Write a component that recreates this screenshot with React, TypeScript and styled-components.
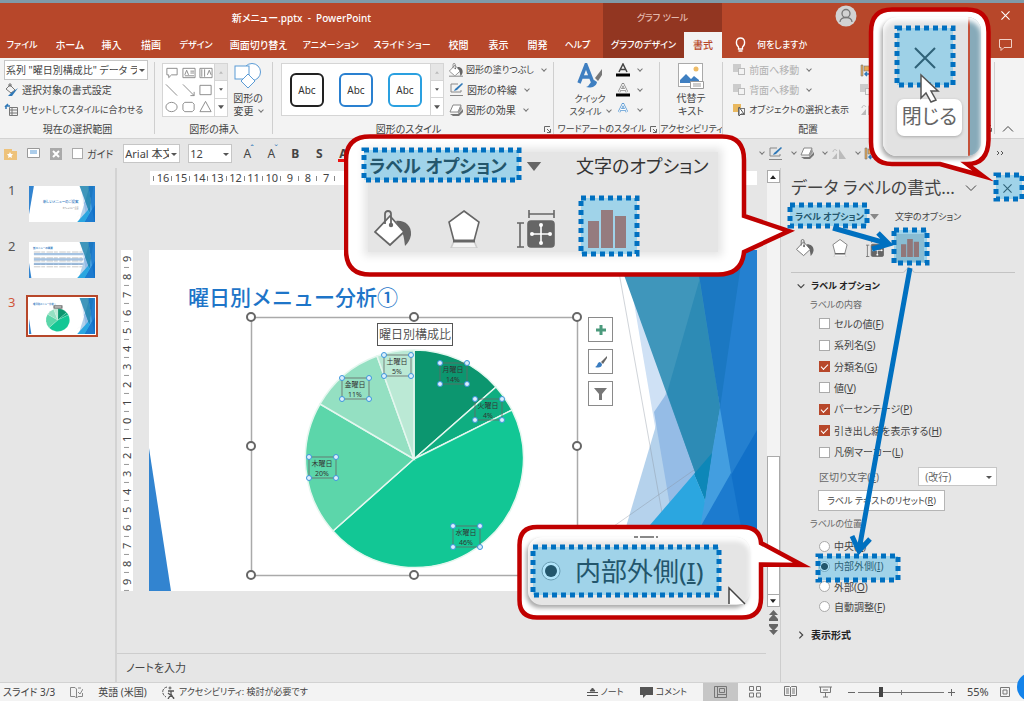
import React from "react";
import styled, { createGlobalStyle, css } from "styled-components";

const GlobalStyle = createGlobalStyle`
  * { box-sizing: border-box; }
  body {
    margin: 0;
    background: #e6e6e6;
    color: #444;
    font-family: "Noto Sans", "Noto Sans CJK JP", sans-serif;
    font-size: 10px;
    line-height: 14px;
    font-feature-settings: "palt";
  }
  button, input, select { font: inherit; color: inherit; font-feature-settings: inherit; }
  button { border: 0; padding: 0; background: none; white-space: nowrap; }
  svg { display: block; flex: none; }
  u { text-underline-offset: 1px; }
`;

const red = "#b7472a";
const blue = "#0070c0";
const gray = "#666";

const Window = styled.div`
  position: relative;
  display: flex;
  flex-direction: column;
  min-height: 100vh;
  overflow: hidden;
`;

/* ---------- header ---------- */
const Header = styled.header`
  display: flex;
  height: 58px;
  background: ${red};
  border-top: 3px solid #7f9aa8;
  color: #fff;
`;
const HeaderPart = styled.div<{ $basis?: number; $dark?: boolean }>`
  flex: ${(p) => (p.$basis ? `0 0 ${p.$basis}px` : "1 1 0")};
  display: flex;
  flex-direction: column;
  background: ${(p) => (p.$dark ? "#923621" : "transparent")};
`;
const TitleRow = styled.div<{ $soft?: boolean }>`
  display: flex;
  align-items: center;
  justify-content: center;
  height: 29px;
  font-size: ${(p) => (p.$soft ? 9 : 10)}px;
  font-weight: 500;
  color: ${(p) => (p.$soft ? "#e3b9ad" : "#fff")};
`;
const TabRow = styled.nav`
  display: flex;
  height: 26px;
`;
const Tab = styled.button<{ $w: number; $active?: boolean; $small?: boolean }>`
  display: flex;
  align-items: center;
  justify-content: center;
  width: ${(p) => p.$w}px;
  font-size: ${(p) => (p.$small ? 9 : 10)}px;
  font-weight: 500;
  color: ${(p) => (p.$active ? red : "#fff")};
  background: ${(p) => (p.$active ? "#f3f3f3" : "transparent")};
`;
const WindowTools = styled.div`
  display: flex;
  align-items: center;
  justify-content: flex-end;
  gap: 144px;
  height: 29px;
  padding: 0 14px 4px 0;
`;
const AskRow = styled.div`
  display: flex;
  align-items: center;
  justify-content: space-between;
  height: 25px;
  padding: 0 12px;
`;
const Ask = styled.button`
  display: flex;
  align-items: center;
  gap: 10px;
  font-size: 9px;
  font-weight: 500;
  color: #fff;
`;

/* ---------- ribbon ---------- */
const Ribbon = styled.section`
  display: flex;
  height: 81px;
  padding-top: 2px;
  background: #f3f3f3;
  border-bottom: 1px solid #d2d2d2;
`;
const Group = styled.div<{ $w?: number }>`
  flex: ${(p) => (p.$w ? `0 0 ${p.$w}px` : "1 1 0")};
  display: flex;
  flex-direction: column;
  position: relative;
  &::after {
    content: "";
    position: absolute;
    right: 0;
    top: 2px;
    height: 72px;
    border-right: ${(p) => (p.$w ? "1px solid #cfcfcf" : "0")};
  }
`;
const GroupBody = styled.div<{ $pad?: number; $gap?: number }>`
  display: flex;
  height: 60px;
  padding-left: ${(p) => p.$pad ?? 0}px;
  gap: ${(p) => p.$gap ?? 0}px;
`;
const GroupLabel = styled.div<{ $small?: boolean }>`
  display: flex;
  align-items: center;
  justify-content: center;
  height: 19px;
  white-space: nowrap;
  font-size: ${(p) => (p.$small ? 9 : 10)}px;
  & > span { flex: 1; display: flex; justify-content: center; }
  & > svg { margin-right: 3px; }
`;
const Stack = styled.div<{ $w?: number }>`
  display: flex;
  flex-direction: column;
  width: ${(p) => (p.$w ? `${p.$w}px` : "auto")};
`;
const Cmd = styled.button<{ $off?: boolean; $small?: boolean }>`
  display: flex;
  align-items: center;
  gap: 3px;
  height: 20px;
  font-size: ${(p) => (p.$small ? 9 : 10)}px;
  color: ${(p) => (p.$off ? "#b1b1b1" : "#444")};
`;
const Caret = styled.i`
  width: 4px;
  height: 4px;
  margin: 0 0 3px 5px;
  border: solid #777;
  border-width: 0 1px 1px 0;
  transform: rotate(45deg);
`;
const BigCmd = styled.button<{ $w: number; $small?: boolean }>`
  display: flex;
  flex-direction: column;
  align-items: center;
  width: ${(p) => p.$w}px;
  padding-top: 3px;
  font-size: ${(p) => (p.$small ? 9 : 10)}px;
  line-height: 13px;
  & > svg { margin-bottom: 3px; }
  & > span { display: flex; align-items: center; }
`;
const Drop = styled.select<{ $w: number; $h: number; $small?: boolean }>`
  appearance: none;
  width: ${(p) => p.$w}px;
  height: ${(p) => p.$h}px;
  padding: 0 10px 0 1px;
  border: 1px solid #c6c6c6;
  border-radius: 0;
  background: #fff;
  font-size: ${(p) => (p.$small ? 10 : 11)}px;
  text-overflow: clip;
`;
const DropBox = styled.span<{ $right?: number }>`
  position: relative;
  display: inline-flex;
  &::after {
    content: "";
    position: absolute;
    right: ${(p) => p.$right ?? 3}px;
    top: calc(50% - 1px);
    border: 3px solid transparent;
    border-top: 3px solid #555;
    border-bottom: 0;
  }
`;
const Gallery = styled.div<{ $h: number }>`
  display: flex;
  height: ${(p) => p.$h}px;
  margin-top: 3px;
  background: #fff;
  border: 1px solid #d5d5d5;
`;
const ShapeGrid = styled.div`
  display: grid;
  grid-template-columns: repeat(3, 17px);
  align-items: center;
  justify-items: center;
`;
const Scroller = styled.div`
  display: grid;
  grid-template-rows: repeat(3, 1fr);
  width: 13px;
  border-left: 1px solid #d5d5d5;
  & > button { display: grid; place-items: center; border-bottom: 1px solid #d5d5d5; }
  & > button:first-child { background: #e6e6e6; }
  & > button:last-child { border-bottom: 0; }
`;
const StyleList = styled.div`
  display: flex;
  align-items: center;
  gap: 15px;
  padding: 0 8px;
`;
const StyleItem = styled.button<{ $c: string }>`
  width: 34px;
  height: 34px;
  border: 2px solid ${(p) => p.$c};
  border-radius: 6px;
  background: #fff;
  font-size: 10px;
  color: #333;
`;

/* ---------- quick access ---------- */
const QuickBar = styled.section`
  display: flex;
  align-items: center;
  justify-content: space-between;
  height: 29px;
  padding: 0 19px 0 4px;
  background: #e6e6e6;
`;
const QuickSet = styled.div<{ $gap: number }>`
  display: flex;
  align-items: center;
  gap: ${(p) => p.$gap}px;
`;
const Letter = styled.button<{ $mark?: string; $line?: string }>`
  position: relative;
  width: 10px;
  height: 16px;
  font-size: 12px;
  line-height: 16px;
  font-weight: ${(p) => (p.$mark ? 400 : 700)};
  border-bottom: ${(p) => (p.$line ? `3px solid ${p.$line}` : "0")};
  &::after {
    content: "${(p) => p.$mark ?? ""}";
    position: absolute;
    left: 8px;
    top: -2px;
    font-size: 9px;
    line-height: 9px;
    color: #2f78b7;
  }
`;

/* ---------- work area ---------- */
const Work = styled.main`
  display: flex;
  flex: 1;
  min-height: 514px;
`;
const Thumbs = styled.aside`
  display: flex;
  flex-direction: column;
  gap: 14px;
  width: 117px;
  padding: 15px 0 0 8px;
  border-right: 2px solid #d3d3d3;
`;
const ThumbRow = styled.div<{ $on?: boolean }>`
  display: flex;
  height: 42px;
  gap: 11px;
  font-size: 13px;
  line-height: 14px;
  color: ${(p) => (p.$on ? "#d0563a" : "#555")};
  & > button {
    width: 72px;
    height: 42px;
    padding: 1px;
    border: 2px solid ${(p) => (p.$on ? red : "transparent")};
    background: ${(p) => (p.$on ? "#fff" : "transparent")};
  }
`;
const Center = styled.div`
  display: flex;
  flex-direction: column;
  flex: 1;
  min-width: 0;
`;
const HRuler = styled.div`
  display: flex;
  justify-content: space-between;
  height: 14px;
  margin: 3px 9px 0 33px;
  padding: 0 5px 0 4px;
  background: #fff;
  font-size: 11px;
  line-height: 14px;
`;
const HMark = styled.span`
  display: flex;
  align-items: center;
  justify-content: center;
  width: 18px;
  position: relative;
  &::before {
    content: "";
    position: absolute;
    left: -1px;
    top: 5px;
    height: 5px;
    border-left: 1px solid #888;
  }
`;
const SlideRow = styled.div`
  display: flex;
  gap: 16px;
  height: 341px;
  margin: 65px 9px 0 4px;
`;
const VRuler = styled.div`
  display: flex;
  flex-direction: column;
  justify-content: space-between;
  width: 12px;
  background: #fff;
  font-size: 11px;
  line-height: 12px;
`;
const VMark = styled.span`
  position: relative;
  display: flex;
  justify-content: center;
  align-items: center;
  height: 18px;
  writing-mode: vertical-rl;
  transform: rotate(180deg);
  &::before {
    content: "";
    position: absolute;
    top: 0;
    left: 4px;
    width: 5px;
    border-top: 1px solid #999;
  }
`;
const Slide = styled.div`
  position: relative;
  flex: 1;
  background: #fff;
  & > svg { width: 100%; height: 100%; }
`;
const SlideTitle = styled.h1`
  position: absolute;
  left: 39px;
  top: 33px;
  margin: 0;
  font-size: 21px;
  line-height: 26px;
  font-weight: 500;
  color: #1e75c8;
  font-family: "Noto Sans CJK JP", sans-serif;
  font-feature-settings: normal;
  white-space: nowrap;
`;
const ChartButtons = styled.div`
  position: absolute;
  left: 439px;
  top: 67px;
  display: flex;
  flex-direction: column;
  gap: 7px;
  & > button {
    display: grid;
    place-items: center;
    width: 25px;
    height: 25px;
    border: 1px solid #8a8a8a;
    background: #fff;
  }
`;
const Notes = styled.div`
  height: 29px;
  margin-top: auto;
  padding: 7px 9px;
  border-top: 1px solid #cdcdcd;
  font-size: 11px;
`;
const Scroll = styled.div`
  display: flex;
  flex-direction: column;
  align-items: center;
  width: 15px;
  padding-top: 2px;
  border-right: 1px solid #cdcdcd;
`;
const ScrollBtn = styled.button`
  display: grid;
  place-items: center;
  width: 13px;
  height: 13px;
  border: 1px solid #aaa;
  background: #fff;
`;
const Track = styled.div`
  display: flex;
  flex-direction: column;
  justify-content: flex-end;
  width: 13px;
  height: 411px;
  background: #f3f3f3;
  &::after {
    content: "";
    height: 137px;
    background: #fff;
    border: 1px solid #aaa;
    border-bottom: 0;
  }
`;
const Jump = styled.div`
  display: flex;
  flex-direction: column;
  gap: 3px;
  margin-top: 3px;
`;

/* ---------- format pane ---------- */
const Pane = styled.aside`
  width: 243px;
  padding: 8px 0 0 10px;
`;
const PaneHead = styled.div`
  display: flex;
  align-items: center;
  height: 24px;
  padding-right: 12px;
  & > h2 { flex: 1; margin: 0; font-size: 17px; line-height: 24px; font-weight: 400; white-space: nowrap; }
  & > button + button { margin-left: 26px; }
`;
const PaneTabs = styled.div`
  display: flex;
  align-items: center;
  gap: 6px;
  height: 34px;
  padding-left: 4px;
  font-size: 9px;
  & > button:last-child { margin-left: 10px; }
`;
const Strong = styled.button`
  font-size: 9px;
  font-weight: 700;
  color: #333;
`;
const PaneIcons = styled.div`
  display: flex;
  align-items: center;
  gap: 17px;
  height: 27px;
  padding-left: 5px;
`;
const BarsButton = styled.button`
  display: grid;
  place-items: center;
  width: 28px;
  height: 28px;
  margin-left: -5px;
  background: #c5c5c5;
`;
const Notch = styled.div`
  position: relative;
  height: 12px;
  margin-right: 9px;
  border-bottom: 1px solid #c3c3c3;
  &::after {
    content: "";
    position: absolute;
    left: 114px;
    bottom: -4px;
    width: 7px;
    height: 7px;
    background: #e6e6e6;
    border: solid #c3c3c3;
    border-width: 1px 0 0 1px;
    transform: rotate(45deg);
  }
`;
const Section = styled.button<{ $top: number; $small?: boolean }>`
  display: flex;
  align-items: center;
  gap: 6px;
  height: 20px;
  margin-top: ${(p) => p.$top}px;
  padding-left: 6px;
  font-size: ${(p) => (p.$small ? 9 : 10)}px;
  font-weight: 700;
  color: #222;
`;
const SubHead = styled.div<{ $h: number }>`
  display: flex;
  align-items: center;
  height: ${(p) => p.$h}px;
  padding-left: 19px;
  font-size: 9px;
  color: #666;
`;
const Options = styled.div<{ $h: number }>`
  display: flex;
  flex-direction: column;
  height: ${(p) => p.$h}px;
  padding-left: 28px;
  & > label {
    display: flex;
    flex: 1;
    align-items: center;
    gap: 4px;
  }
`;
const inputBase = css`
  appearance: none;
  flex: none;
  width: 11px;
  height: 11px;
  margin: 0;
  border: 1px solid #aaa;
  background: #fff;
`;
const Check = styled.input.attrs({ type: "checkbox" })`
  ${inputBase}
  &:checked {
    background: ${red};
    border-color: ${red};
  }
  &:checked::after {
    content: "";
    display: block;
    width: 6px;
    height: 3px;
    margin: 2px 0 0 1px;
    border: solid #fff;
    border-width: 0 0 1px 1px;
    transform: rotate(-45deg);
  }
`;
const Radio = styled.input.attrs({ type: "radio" })`
  ${inputBase}
  border-radius: 50%;
  &:checked { background: radial-gradient(circle, #333 0 3px, #fff 4px); }
`;
const SplitRow = styled.div`
  display: flex;
  align-items: center;
  justify-content: space-between;
  height: 27px;
  padding: 0 27px 0 28px;
  color: #666;
`;
const ResetButton = styled.button`
  display: block;
  width: 127px;
  height: 21px;
  margin-left: 27px;
  border: 1px solid #b5b5b5;
  background: #fff;
  font-size: 9px;
`;

/* ---------- status bar ---------- */
const Status = styled.footer`
  position: relative;
  display: flex;
  align-items: center;
  justify-content: space-between;
  height: 19px;
  padding: 0 14px 0 3px;
  background: #f3f3f3;
  border-top: 1px solid #d2d2d2;
`;
const StatusSet = styled.div<{ $gap: number }>`
  display: flex;
  align-items: center;
  height: 18px;
  gap: ${(p) => p.$gap}px;
  white-space: nowrap;
`;
const StatusItem = styled.button`
  display: flex;
  align-items: center;
  gap: 3px;
  font-size: 9px;
`;
const Percent = styled.span`
  width: 22px;
  font-size: 11px;
`;
const ViewButton = styled.button<{ $on?: boolean }>`
  display: grid;
  place-items: center;
  width: 35px;
  height: 18px;
  background: ${(p) => (p.$on ? "#c6c6c6" : "transparent")};
`;
const Zoom = styled.input.attrs({ type: "range" })`
  appearance: none;
  width: 86px;
  height: 10px;
  margin: 0;
  background:
    linear-gradient(#777, #777) center / 100% 1px no-repeat,
    linear-gradient(#777, #777) center / 1px 5px no-repeat;
  &::-webkit-slider-thumb {
    appearance: none;
    width: 4px;
    height: 10px;
    background: #444;
  }
`;
const HelpBubble = styled.span`
  position: absolute;
  right: -21px;
  bottom: 0;
  width: 28px;
  height: 28px;
  border-radius: 50%;
  background: #1483ea;
`;

/* ---------- annotations ---------- */
const Layer = styled.div`
  position: absolute;
  top: 0;
  right: 0;
  width: 680px;
  height: 701px;
  pointer-events: none;
  & > svg { position: absolute; inset: 0; }
`;
const Panel = styled.div<{ $x: number; $y: number; $w: number; $h: number; $soft?: boolean }>`
  position: absolute;
  left: ${(p) => p.$x}px;
  top: ${(p) => p.$y}px;
  width: ${(p) => p.$w}px;
  height: ${(p) => p.$h}px;
  background: #e5e5e5;
  color: #333;
  white-space: nowrap;
  ${(p) =>
    p.$soft
      ? css`box-shadow: 0 0 8px 4px #e5e5e5;`
      : css`border-radius: 14px; box-shadow: inset 0 4px 5px #fff, -2px 3px 4px #aaa;`}
`;
const BigTabs = styled.div`
  display: flex;
  align-items: center;
  height: 28px;
  font-size: 18px;
  line-height: 28px;
  & > b { width: 158px; padding-left: 1px; }
  & > svg { margin-right: 34px; }
`;
const BigIcons = styled.div`
  display: flex;
  align-items: center;
  justify-content: space-between;
  width: 258px;
  margin-top: 30px;
  padding-left: 6px;
`;
const BigRadio = styled.div`
  display: flex;
  align-items: center;
  gap: 14px;
  height: 68px;
  padding-left: 13px;
  font-size: 26px;
`;
const ClosePanel = styled(Panel)`
  background: linear-gradient(90deg, #e2e2e2 85px, #c4513a 85px 87px, #87aab9 87px);
`;
const Tip = styled.span`
  position: absolute;
  left: 14px;
  top: 82px;
  width: 65px;
  height: 37px;
  border-radius: 7px;
  background: #fff;
  box-shadow: 0 1px 3px #aaa;
  font-size: 20px;
  line-height: 36px;
  text-align: center;
  color: #666;
`;

/* ---------- icons ---------- */
const Chevron = ({ w = 12, dir = "down" }: { w?: number; dir?: "down" | "right" | "up" }) => (
  <svg width={w} height={w} viewBox="0 0 12 12" fill="none" stroke="#444" strokeWidth={w > 10 ? 1 : 1.8}>
    <path d={dir === "down" ? "M1 3.5l5 5 5-5" : dir === "up" ? "M1 8.5l5-5 5 5" : "M3.5 1l5 5-5 5"} />
  </svg>
);
const Cross = ({ s, c = "#444" }: { s: number; c?: string }) => (
  <svg width={s} height={s} viewBox="0 0 10 10" stroke={c} strokeWidth="1.200" fill="none">
    <path d="M.5.5l9 9M9.5.5l-9 9" />
  </svg>
);
const Tri = ({ w = 7, up = false, c = "#555" }: { w?: number; up?: boolean; c?: string }) => (
  <svg width={w} height={w / 2 + 1} viewBox="0 0 8 5" fill={c}>
    <path d={up ? "M0 5l4-5 4 5z" : "M0 0l4 5 4-5z"} />
  </svg>
);
const Launcher = () => (
  <svg width="7" height="7" viewBox="0 0 7 7" fill="none" stroke="#666">
    <path d="M.5 6V.5H6M3 3l3 3M6.500 3v3.500H3" />
  </svg>
);
const Bucket = ({ s, c }: { s: number; c?: string }) => (
  <svg width={s} height={s} viewBox="0 0 38 38" fill="none">
    <path d="M22 11c8-1 16 4 15 14-1 5-3 8-6 11-1-9-2-15-6-19z" fill={gray} />
    <path d="M16 6l14 16-14 13L1 22z" fill="#fff" stroke={gray} strokeWidth="1.800" />
    <path d="M11 14V4c0-4 6-4 6 0v10" stroke={gray} strokeWidth="1.800" />
    <circle cx="17" cy="15" r="2.200" fill={gray} />
    {c && <path d="M0 34h38v5H0z" fill={c} />}
  </svg>
);
const Penta = ({ s }: { s: number }) => (
  <svg width={s} height={s} viewBox="0 0 38 38" fill="#fff" stroke={gray} strokeWidth="1.600">
    <path d="M9 31h20l3 7H6z" fill="#f4f4f4" stroke="#ccc" />
    <path d="M19 1l15 11-5 19H9L4 12z" />
    <path d="M8 31h22" strokeWidth="3" />
  </svg>
);
const Size = ({ s }: { s: number }) => (
  <svg width={s} height={s} viewBox="0 0 38 38" fill="none" stroke={gray} strokeWidth="1.600">
    <path d="M12 4h25M12 0v8M37 0v8M3 13v24M0 13h7M0 37h7" />
    <rect x="11" y="11" width="26" height="26" rx="3" fill={gray} />
    <path d="M24 14v20M14 24h20" stroke="#fff" />
    <g fill="#fff" stroke="none">
      <circle cx="24" cy="15" r="2" /><circle cx="24" cy="33" r="2" />
      <circle cx="15" cy="24" r="2" /><circle cx="33" cy="24" r="2" />
    </g>
  </svg>
);
const Bars = ({ s }: { s: number }) => (
  <svg width={s} height={s} viewBox="0 0 38 38" fill="#d24726" fillOpacity=".8">
    <path d="M0 11h11v27H0zM13 0h12v38H13zM27 6h11v32H27z" />
  </svg>
);
const Pen = () => (
  <svg width="15" height="14" viewBox="0 0 15 14" fill="none">
    <path d="M9 1H2v8h10V7M1 12.500h13" stroke="#888" />
    <path d="M5 8l1-2 7-6 1 1-6 6z" fill="#2f78b7" />
  </svg>
);
const Effect = () => (
  <svg width="14" height="13" viewBox="0 0 14 13">
    <path d="M4 12h6l4-4V5l-5 5H1z" fill="#777" />
    <path d="M4 1h8l-3 7H1z" fill="#fff" stroke="#888" />
    <path d="M12 1l1 4-4 5V8z" fill="#999" />
  </svg>
);
const LetterA = ({ c, line, out }: { c: string; line?: string; out?: boolean }) => (
  <svg width="14" height="14" viewBox="0 0 14 14" fill="none" stroke={c} strokeWidth={out ? 2.5 : 1.5}>
    <path d="M3 9L7 1l4 8M4.500 6.500h5" />
    {out && <path d="M3 9L7 1l4 8M4.500 6.500h5" stroke="#fff" strokeWidth="1" />}
    {line && <path d="M0 12h14" stroke={line} strokeWidth="3" />}
  </svg>
);
const Layers = ({ off = true }: { off?: boolean }) => (
  <svg width="13" height="12" viewBox="0 0 13 12">
    <rect x="0" y="0" width="8" height="8" fill={off ? "#ccc" : "#e9b85f"} />
    <rect x="5.500" y="4.500" width="6" height="6" fill="#f3f3f3" stroke={off ? "#bbb" : "#777"} />
    {!off && <path d="M6 3v9l2-2h3z" fill="#fff" stroke="#555" />}
  </svg>
);
const Paste = () => (
  <svg width="12" height="13" viewBox="0 0 12 13">
    <path d="M1 1h2v11H1zM4 2h7v5H4z" fill="#e3a857" stroke="#777" strokeWidth=".6" />
    <path d="M11 10H5M7 8l-2 2 2 2" fill="none" stroke="#2f78b7" strokeWidth="1.500" />
  </svg>
);
const Flip = () => (
  <svg width="16" height="12" viewBox="0 0 16 12" fill="#bbb">
    <path d="M8 1v10h7zM6 5v6H1z" /><path d="M2 4c0-3 3-3 4-1" fill="none" stroke="#bbb" />
  </svg>
);
const Brush = () => (
  <svg width="14" height="14" viewBox="0 0 14 14">
    <path d="M13 1L7 7l2 2 4-6z" fill="#666" />
    <path d="M6 7l2 2c0 4-4 4-7 3 3-1 2-5 5-5z" fill="#3a7cc0" />
  </svg>
);

/* Faceted slide background, drawn in the slide's own 608 by 341 space. */
const Facets = ({ full = false }: { full?: boolean }) => (
  <g>
    <path d="M476 0L527 300 620 300 560 0z" fill="#cfe1f5" />
    <path d="M559 0L458 341H608V0z" fill="#b5d2ec" />
    <path d="M505 162L518 143 560 250 524 274z" fill="#95bce6" />
    <path d="M466 0L527 341M445 290L608 176" stroke="#8a93a0" strokeOpacity=".4" fill="none" />
    <path d="M466 0H550L571 158 563 203 556 250z" fill="#3f96bb" />
    <path d="M559 0L518 143 556 250 571 158 550 27z" fill="#2d8bb5" />
    <path d="M546 0H608V341H550L571 158z" fill="#1b78c2" />
    <path d="M594 0H608V341H575L571 158z" fill="#2480d0" />
    <path d="M571 158L582 223 554 341H520L556 250 563 203z" fill="#439ee0" />
    <path d="M563 203L545 224 556 250z" fill="#0d87b8" />
    <path d="M545 224L444 341H540L556 250z" fill="#2ba6e0" />
    <path d="M608 180L515 341H608z" fill="#1170c8" />
    <path d="M582 223L515 341H604z" fill="#1c7bcf" />
    <path d={full ? "M0 0H45L0 270z" : "M0 198L22 341H0z"} fill="#3284d0" />
  </g>
);

const slices = [
  { d: "M265 209V100A109 109 0 0 1 347 137z", c: "#0c966f" },
  { d: "M265 209L347 137A109 109 0 0 1 363 160z", c: "#0fae81" },
  { d: "M265 209L363 160A109 109 0 0 1 184 281z", c: "#12c795" },
  { d: "M265 209L184 281A109 109 0 0 1 171 154z", c: "#5cd6aa" },
  { d: "M265 209L171 154A109 109 0 0 1 228 106z", c: "#94e0c2" },
  { d: "M265 209L228 106A109 109 0 0 1 265 100z", c: "#bbe9d5" },
];
const labels = [
  { t: "月曜日", p: "14%", x: 291, y: 113 },
  { t: "火曜日", p: "4%", x: 326, y: 149 },
  { t: "水曜日", p: "46%", x: 304, y: 276 },
  { t: "木曜日", p: "20%", x: 160, y: 207 },
  { t: "金曜日", p: "11%", x: 193, y: 128 },
  { t: "土曜日", p: "5%", x: 235, y: 105 },
];
const Pie = () => (
  <g stroke="#e4f7ef" strokeWidth="1.500">
    {slices.map((s) => <path key={s.c} d={s.d} fill={s.c} />)}
  </g>
);
const ChartTitle = styled.text`
  font-feature-settings: normal;
`;
const Chart = () => (
  <g>
    <rect x="102.500" y="67.500" width="326" height="258" fill="none" stroke="#aaa" strokeWidth="1.500" />
    <Pie />
    <rect x="228.500" y="73.500" width="75" height="22" fill="#fff" stroke="#555" />
    <ChartTitle x="266" y="89" fontSize="12" textAnchor="middle" fill="#555">曜日別構成比</ChartTitle>
    {labels.map((l) => (
      <g key={l.t}>
        <rect x={l.x} y={l.y} width="27" height="21" fill="none" stroke="#666" strokeWidth=".8" />
        <text x={l.x + 13} y={l.y + 9} fontSize="7" textAnchor="middle" fill="#333">{l.t}</text>
        <text x={l.x + 13} y={l.y + 19} fontSize="7" textAnchor="middle" fill="#333">{l.p}</text>
        {[0, 27].map((dx) => [0, 21].map((dy) => (
          <circle key={`${dx}${dy}`} cx={l.x + dx} cy={l.y + dy} r="2.500" fill="#dceefc" stroke="#3c96dc" />
        )))}
      </g>
    ))}
    {[[102, 67], [265, 67], [428, 67], [102, 196], [428, 196], [102, 325], [265, 325], [428, 325]].map(([x, y]) => (
      <circle key={`${x}-${y}`} cx={x} cy={y} r="4" fill="#fff" stroke="#666" strokeWidth="2" />
    ))}
  </g>
);

const Thumb = ({ n }: { n: number }) => (
  <ThumbRow $on={n === 3}>
    <span>{n}</span>
    <button aria-label={`スライド ${n}`}>
      <svg width="66" height="36" viewBox="0 0 608 341" preserveAspectRatio="none">
        <rect width="608" height="341" fill="#fff" />
        <Facets full={n === 1} />
        {n === 1 && (
          <g textAnchor="end" fill="#2f78c0">
            <text x="455" y="160" fontSize="32" fontWeight="500">新しいメニューのご提案</text>
            <text x="455" y="215" fontSize="18" fill="#777">カフェメニュー企画</text>
          </g>
        )}
        {n === 2 && (
          <g>
            <text x="38" y="62" fontSize="24" fill="#2f78c0" fontWeight="700">新メニューの概要</text>
            <path d="M45 95H490M45 150H490M45 180H490M45 210H490M45 235H490" stroke="#999" strokeWidth="5" strokeDasharray="60 8 35 14" />
            <path d="M45 115H500M45 165H500M45 207H500" stroke="#5d92ca" strokeOpacity=".55" strokeWidth="22" />
          </g>
        )}
        {n === 3 && (
          <g>
            <text x="38" y="62" fontSize="22" fill="#2f78c0" fontWeight="700">曜日別メニュー分析①</text>
            <Pie />
            <rect x="230" y="74" width="74" height="22" fill="#ccc" stroke="#555" strokeWidth="8" />
          </g>
        )}
      </svg>
    </button>
  </ThumbRow>
);

const tabs: [string, number, boolean?][] = [
  ["ファイル", 44, true], ["ホーム", 52], ["挿入", 31], ["描画", 48], ["デザイン", 42, true], ["画面切り替え", 83],
  ["アニメーション", 61, true], ["スライド ショー", 82, true], ["校閲", 31], ["表示", 49], ["開発", 29], ["ヘルプ", 51, true],
];
const checks: [string, string, boolean][] = [
  ["セルの値", "F", false], ["系列名", "S", false], ["分類名", "G", true], ["値", "V", false],
  ["パーセンテージ", "P", true], ["引き出し線を表示する", "H", true], ["凡例マーカー", "L", false],
];
const radios: [string, string][] = [["中央", "C"], ["内部外側", "I"], ["外部", "O"], ["自動調整", "F"]];
const shapePaths = [
  "M2 2h11v7H7l-3 3V9H2z", "M1 2h13v10H1zM3 9l2-5 2 5M9 5h4M9 7h4M3 10h10", "M1 2h13v10H1zM9 9l2-5 2 5M3 3v8M6 3v8",
  "M1 1l12 12", "M1 1l12 12M9 13h4V9", "M1 2h12v10H1z",
  "M1 7a6 5 0 1 0 12 0a6 5 0 1 0-12 0z", "M3 2h8l2 2v6l-2 2H3l-2-2V4z", "M7 1l6 11H1z",
];

/* Ruler marks count down to zero and up again; `numbered` limits how many carry a number. */
const Marks = ({ n, numbered = 2 * n + 1, As }: { n: number; numbered?: number; As: React.ElementType }) => (
  <>{Array.from({ length: 2 * n + 1 }, (_, i) => <As key={i}>{i < numbered ? Math.abs(n - i) : null}</As>)}</>
);
const GalleryArrows = () => (
  <Scroller>
    <button aria-label="前へ"><Tri w={4} up c="#bbb" /></button>
    <button aria-label="次へ"><Tri w={4} /></button>
    <button aria-label="その他"><Tri w={6} /></button>
  </Scroller>
);

const highlights = [
  [364, 150, 155, 30], [581, 198, 56, 56], [897, 28, 56, 57], [996, 175, 26, 24],
  [790, 205, 77, 21], [894, 230, 33, 33], [818, 556, 80, 24], [533, 547, 186, 48],
];

export default function App() {
  return (
    <Window>
      <GlobalStyle />
      <Header>
        <HeaderPart $basis={603}>
          <TitleRow>新メニュー.pptx&nbsp; -&nbsp; PowerPoint</TitleRow>
          <TabRow>{tabs.map(([t, w, small]) => <Tab key={t} $w={w} $small={small}>{t}</Tab>)}</TabRow>
        </HeaderPart>
        <HeaderPart $basis={119} $dark>
          <TitleRow $soft>グラフ ツール</TitleRow>
          <TabRow>
            <Tab $w={81} $small>グラフのデザイン</Tab>
            <Tab $w={38} $active>書式</Tab>
          </TabRow>
        </HeaderPart>
        <HeaderPart>
          <WindowTools>
            <svg width="22" height="22" viewBox="0 0 22 22" fill="none" stroke="#777" strokeWidth="1.300">
              <circle cx="11" cy="11" r="10.500" fill="#d2d2d2" stroke="none" />
              <circle cx="11" cy="8.500" r="4" /><path d="M5 17c0-6 12-6 12 0" />
            </svg>
            <button aria-label="ウィンドウを閉じる"><Cross s={9} c="#fff" /></button>
          </WindowTools>
          <AskRow>
            <Ask>
              <svg width="13" height="15" viewBox="0 0 13 15" fill="none" stroke="#fff" strokeWidth="1.300">
                <path d="M4.500 10C1 7 2 1 6.500 1S12 7 8.500 10v2h-4zM4.500 14h4" />
              </svg>
              何をしますか
            </Ask>
            <svg width="13" height="12" viewBox="0 0 13 12" fill="none" stroke="#f0d0c6">
              <path d="M.5.5h12v8H5l-3 3v-3H.5z" />
            </svg>
          </AskRow>
        </HeaderPart>
      </Header>

      <Ribbon>
        <Group $w={155}>
          <GroupBody $pad={4}>
            <Stack>
              <DropBox>
                <Drop $w={144} $h={20} $small aria-label="グラフ要素"><option>系列 "曜日別構成比" データ ラベル</option></Drop>
              </DropBox>
              <Cmd>
                <svg width="15" height="14" viewBox="0 0 15 14" fill="none" stroke="#777">
                  <path d="M6 2l5 5-4 3-5-4zM5 4V1h2v3" /><path d="M14 5l-6 8H4l3-3z" fill="#2f78b7" stroke="none" />
                </svg>
                選択対象の書式設定
              </Cmd>
              <Cmd $small>
                <svg width="15" height="14" viewBox="0 0 15 14" fill="none" stroke="#777">
                  <path d="M5.500 4.500h8v8h-8zM5 7h8M5 10h8M8 5v7" /><path d="M2 6V3h4M4 1L1 4" stroke="#2f78b7" strokeWidth="1.500" />
                </svg>
                リセットしてスタイルに合わせる
              </Cmd>
            </Stack>
          </GroupBody>
          <GroupLabel>現在の選択範囲</GroupLabel>
        </Group>
        <Group $w={118}>
          <GroupBody $pad={7} $gap={4}>
            <Gallery $h={54}>
              <ShapeGrid>
                {shapePaths.map((d) => (
                  <svg key={d} width="14" height="14" viewBox="0 0 15 14" fill="none" stroke="#888"><path d={d} /></svg>
                ))}
              </ShapeGrid>
              <GalleryArrows />
            </Gallery>
            <BigCmd $w={32}>
              <svg width="28" height="26" viewBox="0 0 28 26" fill="#fff" stroke="#5b9bd5">
                <circle cx="18" cy="9" r="8.500" /><rect x="1" y="3" width="14" height="13" /><path d="M14 11l7 7-7 7-7-7z" />
              </svg>
              <span>図形の</span>
              <span>変更<Caret /></span>
            </BigCmd>
          </GroupBody>
          <GroupLabel>図形の挿入</GroupLabel>
        </Group>
        <Group $w={281}>
          <GroupBody $pad={8} $gap={5}>
            <Gallery $h={53}>
              <StyleList>
                <StyleItem $c="#222">Abc</StyleItem>
                <StyleItem $c="#2a80d0">Abc</StyleItem>
                <StyleItem $c="#2aa0e0">Abc</StyleItem>
              </StyleList>
              <GalleryArrows />
            </Gallery>
            <Stack>
              <Cmd $small><Bucket s={14} c="#aaa" />図形の塗りつぶし<Caret /></Cmd>
              <Cmd><Pen />図形の枠線<Caret /></Cmd>
              <Cmd><Effect />図形の効果<Caret /></Cmd>
            </Stack>
          </GroupBody>
          <GroupLabel><span>図形のスタイル</span><Launcher /></GroupLabel>
        </Group>
        <Group $w={106}>
          <GroupBody $pad={15} $gap={5}>
            <BigCmd $w={42} $small>
              <svg width="26" height="26" viewBox="0 0 26 26" fill="none">
                <path d="M2 20L9 2l7 18M5 14h9" stroke="#3f7fc1" strokeWidth="3.500" />
                <path d="M25 6l-7 9 3 3 4-6z" fill="#777" /><path d="M17 17l3 2c-1 6-8 6-11 5 4-1 4-6 8-7z" fill="#3f7fc1" />
              </svg>
              <span>クイック</span>
              <span>スタイル<Caret /></span>
            </BigCmd>
            <Stack>
              <Cmd aria-label="文字の塗りつぶし"><LetterA c="#444" line="#000" /><Caret /></Cmd>
              <Cmd aria-label="文字の輪郭"><LetterA c="#888" line="#000" out /><Caret /></Cmd>
              <Cmd aria-label="文字の効果"><LetterA c="#5b9bd5" out /><Caret /></Cmd>
            </Stack>
          </GroupBody>
          <GroupLabel $small><span>ワードアートのスタイル</span><Launcher /></GroupLabel>
        </Group>
        <Group $w={63}>
          <GroupBody $pad={8}>
            <BigCmd $w={46}>
              <svg width="26" height="26" viewBox="0 0 26 26">
                <rect x=".5" y=".5" width="24" height="23" fill="#fff" stroke="#aaa" />
                <circle cx="18" cy="6" r="2.500" fill="#eebb66" /><path d="M2 20V17l6-6 5 5 3-3 5 4v3z" fill="#3f7fc1" />
                <path d="M12.500 18.500h13v7h-13zM15 21h8M15 23h8" fill="#fff" stroke="#999" />
              </svg>
              <span>代替テ</span>
              <span>キスト</span>
            </BigCmd>
          </GroupBody>
          <GroupLabel $small>アクセシビリティ</GroupLabel>
        </Group>
        <Group $w={170}>
          <GroupBody $pad={10}>
            <Stack $w={127}>
              <Cmd $off><Layers />前面へ移動<Caret /></Cmd>
              <Cmd $off><Layers />背面へ移動<Caret /></Cmd>
              <Cmd $small><Layers off={false} />オブジェクトの選択と表示</Cmd>
            </Stack>
            <Stack>
              <Cmd aria-label="配置"><Paste /></Cmd>
              <Cmd aria-label="グループ化"><Layers /></Cmd>
              <Cmd aria-label="回転"><Flip /></Cmd>
            </Stack>
          </GroupBody>
          <GroupLabel>配置</GroupLabel>
        </Group>
        <Group $w={102}>
          <GroupBody />
          <GroupLabel><span /><Launcher /></GroupLabel>
        </Group>
        <Group>
          <GroupBody />
          <GroupLabel><Chevron dir="up" /></GroupLabel>
        </Group>
      </Ribbon>

      <QuickBar>
        <QuickSet $gap={10}>
          <svg width="13" height="12" viewBox="0 0 13 12"><path d="M0 1h8v2h5v9H0z" fill="#eec27a" /><path d="M6 4l1 2h2L7.500 8l.5 2-2-1-2 1 .5-2L3 6h2z" fill="#fff" /></svg>
          <svg width="13" height="11" viewBox="0 0 13 11" fill="#fff" stroke="#999"><path d="M.5.5h12v9H.5z" /><path d="M3 3h7M3 5h7" stroke="#5b9bd5" /></svg>
          <svg width="12" height="12" viewBox="0 0 12 12"><path d="M0 0h12v12H0z" fill="#aaa" /><path d="M3 3l6 6M9 3l-6 6" stroke="#fff" strokeWidth="2" /></svg>
          <QuickSet as="label" $gap={4}><Check />ガイド</QuickSet>
          <QuickSet $gap={8}>
            <DropBox><Drop $w={57} $h={19} aria-label="フォント"><option>Arial 本文</option></Drop></DropBox>
            <DropBox><Drop $w={44} $h={19} aria-label="フォント サイズ"><option>12</option></Drop></DropBox>
          </QuickSet>
          <QuickSet $gap={14}>
            <Letter $mark="ˆ">A</Letter>
            <Letter $mark="ˇ">A</Letter>
            <Letter>B</Letter>
            <Letter>S</Letter>
            <Letter $line="#e11">A</Letter>
          </QuickSet>
        </QuickSet>
        <QuickSet $gap={4}>
          <Caret /><Pen /><Caret /><Effect /><Caret /><Flip /><Caret /><Paste />
          <svg width="125" height="8" viewBox="0 0 125 8" fill="none" stroke="#555"><path d="M117 1l2 2-2 2M121 1l2 2-2 2" /></svg>
        </QuickSet>
      </QuickBar>

      <Work>
        <Thumbs>
          <Thumb n={1} />
          <Thumb n={2} />
          <Thumb n={3} />
        </Thumbs>
        <Center>
          <HRuler><Marks n={16} numbered={10} As={HMark} /></HRuler>
          <SlideRow>
            <VRuler><Marks n={9} As={VMark} /></VRuler>
            <Slide>
              <svg viewBox="0 0 608 341" preserveAspectRatio="xMinYMin slice">
                <Facets />
                <Chart />
              </svg>
              <SlideTitle>曜日別メニュー分析①</SlideTitle>
              <ChartButtons>
                <button aria-label="グラフ要素"><svg width="10" height="10" viewBox="0 0 10 10"><path d="M5 0v10M0 5h10" stroke="#4b9a7c" strokeWidth="3" /></svg></button>
                <button aria-label="グラフ スタイル"><Brush /></button>
                <button aria-label="グラフ フィルター"><svg width="13" height="12" viewBox="0 0 13 12" fill="#777"><path d="M0 0h13L8 6v6H5V6z" /></svg></button>
              </ChartButtons>
            </Slide>
          </SlideRow>
          <Notes>ノートを入力</Notes>
        </Center>
        <Scroll>
          <ScrollBtn aria-label="上へ"><Tri w={6} up c="#222" /></ScrollBtn>
          <Track />
          <ScrollBtn aria-label="下へ"><Tri w={6} c="#222" /></ScrollBtn>
          <Jump>
            <svg width="9" height="11" viewBox="0 0 9 11" fill="#666"><path d="M4.500 0L9 5H0zM4.500 4L9 9H0zM0 9h9v2H0z" /></svg>
            <svg width="9" height="11" viewBox="0 0 9 11" fill="#666"><path d="M4.500 11L9 6H0zM4.500 7L9 2H0zM0 0h9v2H0z" /></svg>
          </Jump>
        </Scroll>
        <Pane>
          <PaneHead>
            <h2>データ ラベルの書式...</h2>
            <button aria-label="作業ウィンドウのオプション"><Chevron /></button>
            <button aria-label="閉じる"><Cross s={9} /></button>
          </PaneHead>
          <PaneTabs>
            <Strong>ラベル オプション</Strong>
            <Tri w={9} c="#888" />
            <button>文字のオプション</button>
          </PaneTabs>
          <PaneIcons>
            <Bucket s={18} />
            <Penta s={18} />
            <Size s={18} />
            <BarsButton aria-label="ラベル オプション"><Bars s={18} /></BarsButton>
          </PaneIcons>
          <Notch />
          <Section $top={3} $small><Chevron w={8} />ラベル オプション</Section>
          <SubHead $h={17}>ラベルの内容</SubHead>
          <Options $h={150}>
            {checks.map(([t, k, on]) => (
              <label key={t}><Check defaultChecked={on} /><span>{t}(<u>{k}</u>)</span></label>
            ))}
          </Options>
          <SplitRow>
            <label htmlFor="separator">区切り文字(<u>E</u>)</label>
            <DropBox $right={5}><Drop id="separator" $w={79} $h={19} $small><option>&nbsp; (改行)</option></Drop></DropBox>
          </SplitRow>
          <ResetButton>ラベル テキストのリセット(<u>R</u>)</ResetButton>
          <SubHead $h={25}>ラベルの位置</SubHead>
          <Options $h={81}>
            {radios.map(([t, k]) => (
              <label key={t}><Radio name="position" defaultChecked={k === "I"} /><span>{t}(<u>{k}</u>)</span></label>
            ))}
          </Options>
          <Section $top={8}><Chevron w={8} dir="right" />表示形式</Section>
        </Pane>
      </Work>

      <Status>
        <StatusSet $gap={15}>
          <span>スライド 3/3</span>
          <svg width="13" height="11" viewBox="0 0 13 11" fill="none" stroke="#888"><path d="M6.500 2L5 .5H.5v9H5L6.500 11 8 9.500h4.500V6M6.500 2v9M8 1h3M8 5l2 2 3-5" /></svg>
          <span>英語 (米国)</span>
          <StatusItem>
            <svg width="14" height="13" viewBox="0 0 14 13" fill="none" stroke="#555"><path d="M5 1C0 2-1 8 4 11" strokeDasharray="3 1" /><path d="M6 5h6M9 5v3l-3 5M9 8l3 5M6 7l6 5" strokeWidth="1.300" /><circle cx="8" cy="2" r="1" /></svg>
            アクセシビリティ: 検討が必要です
          </StatusItem>
        </StatusSet>
        <StatusSet $gap={16}>
          <StatusItem>
            <svg width="11" height="10" viewBox="0 0 11 10" stroke="#555"><path d="M0 5.500h11M0 8.500h11" /><path d="M3 4l2.500-3L8 4z" fill="#555" /></svg>
            ノート
          </StatusItem>
          <StatusItem>
            <svg width="13" height="11" viewBox="0 0 13 11" fill="#555"><path d="M0 0h13v8H6l-3 3V8H0z" /></svg>
            コメント
          </StatusItem>
          <StatusSet $gap={11}>
            <StatusSet $gap={0}>
              <ViewButton $on aria-label="標準"><svg width="13" height="12" viewBox="0 0 13 12" fill="none" stroke="#777"><path d="M.5.500h12v11H.5zM3.500.5v11M5.500 2.500h5v4h-5zM3.500 8.500h9" /></svg></ViewButton>
              <ViewButton aria-label="スライド一覧"><svg width="13" height="12" viewBox="0 0 13 12" fill="none" stroke="#777"><path d="M.5.500h4v4h-4zM7.500.500h4v4h-4zM.500 7h4v4h-4zM7.500 7h4v4h-4z" /></svg></ViewButton>
              <ViewButton aria-label="閲覧表示"><svg width="13" height="12" viewBox="0 0 13 12" fill="none" stroke="#777"><path d="M.5.500h5l1 1 1-1h5v9h-5l-1 1-1-1h-5zM6.500 1v10M2 3h3M2 5h3M2 7h3M8 3h3M8 5h3M8 7h3" /></svg></ViewButton>
              <ViewButton aria-label="スライド ショー"><svg width="13" height="12" viewBox="0 0 13 12" fill="none" stroke="#777"><path d="M0 1h13M1.500 1v5.500h10V1M6.500 7v4M4 11h5M4 4h5" /></svg></ViewButton>
              <StatusSet $gap={3}>
                <svg width="12" height="9" viewBox="0 0 12 9" stroke="#666"><path d="M5 4.500h7" /></svg>
                <Zoom aria-label="ズーム" min={10} max={100} defaultValue={33} />
                <svg width="9" height="9" viewBox="0 0 9 9" stroke="#666"><path d="M1 4.500h7M4.500 1v7" /></svg>
              </StatusSet>
            </StatusSet>
            <Percent>55%</Percent>
            <svg width="10" height="10" viewBox="0 0 10 10" fill="none" stroke="#777"><path d="M.5.500h9v9h-9zM2 4h2V2M8 4H6V2M2 6h2v2M8 6H6v2" /></svg>
          </StatusSet>
        </StatusSet>
        <HelpBubble />
      </Status>

      <Layer>
        <svg width="680" height="701" viewBox="344 0 680 701" fill="#fff" stroke="#c00000" strokeWidth="4.500" strokeMiterlimit="20">
          <path d="M370 136.500H722Q744 136.500 744 160V216L789 231 744 252Q742 274.500 718 274.500H370Q346 274.500 346 250V160Q346 136.500 370 136.500z" />
          <path d="M892 9.500H967Q988.500 9.500 988.500 32V140Q988 164 967 164L983 176 940 164H892Q871 164 871 142V32Q871 9.500 892 9.500z" />
          <path d="M537 527H742Q760 527 761 543L802 565 761 564.500V598Q761 617.500 742 617.500H537Q519.500 617.500 519.500 600V545Q519.500 527 537 527z" />
        </svg>
        <Panel $soft $x={24} $y={152} $w={350} $h={100}>
          <BigTabs>
            <b>ラベル オプション</b>
            <Tri w={16} c="#666" />
            <span>文字のオプション</span>
          </BigTabs>
          <BigIcons>
            <Bucket s={38} />
            <Penta s={38} />
            <Size s={38} />
            <Bars s={38} />
          </BigIcons>
        </Panel>
        <ClosePanel $x={539} $y={17} $w={98} $h={139}>
          <Tip>閉じる</Tip>
        </ClosePanel>
        <Panel $x={184} $y={537} $w={222} $h={68}>
          <BigRadio>
            <svg width="20" height="20" viewBox="0 0 20 20"><circle cx="10" cy="10" r="9" fill="#fff" stroke="#999" /><circle cx="10" cy="10" r="6" fill="#333" /></svg>
            <span>内部外側(<u>I</u>)</span>
          </BigRadio>
        </Panel>
        <svg width="680" height="701" viewBox="344 0 680 701" fill="none">
          <path d="M915 48l20 20M935 48l-20 20" stroke="#444" strokeWidth="2" />
          {highlights.map(([x, y, w, h]) => (
            <rect key={`${x}-${y}`} x={x} y={y} width={w} height={h} fill="#00aaf3" fillOpacity=".3" stroke={blue} strokeWidth="5" strokeDasharray="5 4" />
          ))}
          <path d="M833 228L889 244M878 233l11 11-17 5M910 268L859 550M852 536l7 15 11-12" stroke={blue} strokeWidth="5" />
          <path d="M921 75v23l5-5 5 9 5-2-5-9h7z" fill="#fff" stroke="#555" strokeWidth="1.500" />
          <path d="M729 604V588l16 16" fill="#fff" stroke="#444" strokeWidth="1.500" />
          <path d="M634 537h24" stroke="#888" strokeWidth="2" strokeDasharray="4 2 14 2" />
        </svg>
      </Layer>
    </Window>
  );
}
